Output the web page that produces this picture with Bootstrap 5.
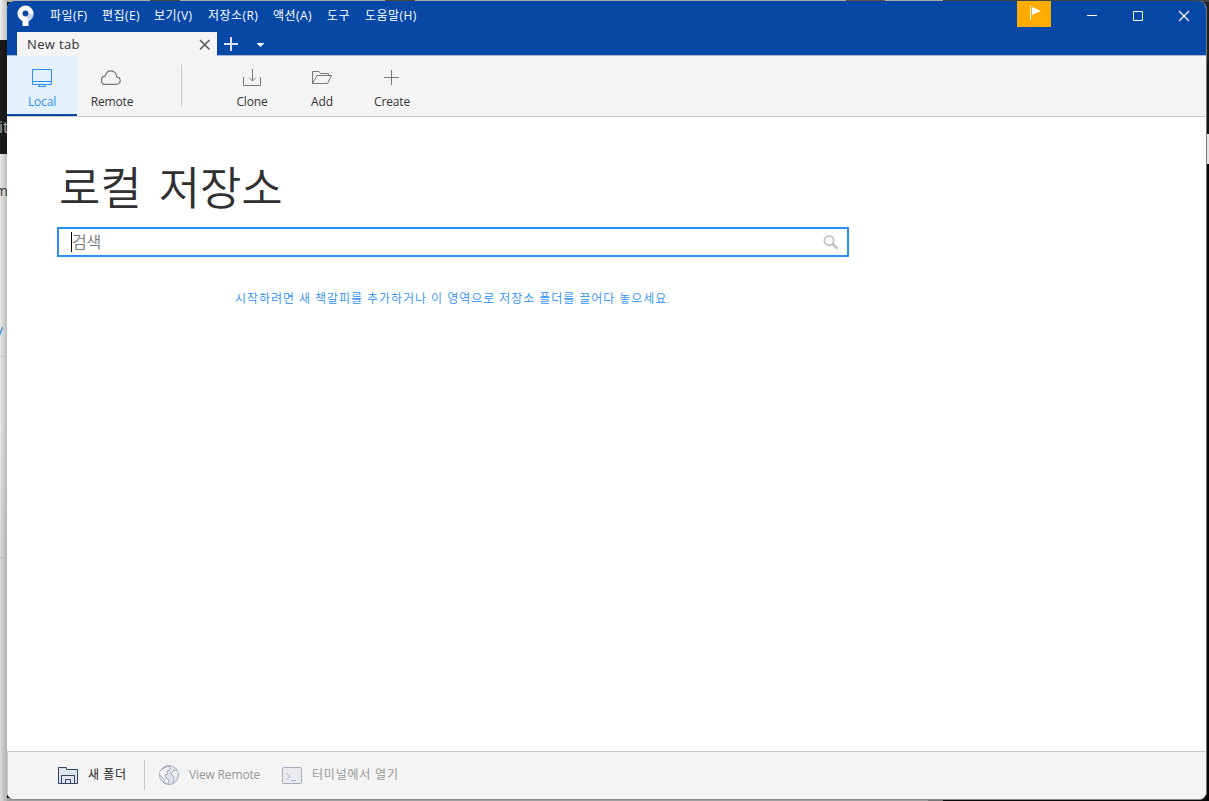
<!DOCTYPE html>
<html lang="ko">
<head>
<meta charset="utf-8">
<title>New tab</title>
<link href="https://cdn.jsdelivr.net/npm/bootstrap@5.3.0/dist/css/bootstrap.min.css" rel="stylesheet">
<style>
body{height:801px;overflow:hidden;font-family:"Open Sans","Noto Sans CJK KR",sans-serif;font-size:12px;line-height:18px;color:#333;white-space:nowrap;
background:
linear-gradient(#c8c8c8,#c8c8c8) 0 356px/7px 1px no-repeat,
linear-gradient(#bbb,#bbb) 0 557px/7px 1px no-repeat,
linear-gradient(90deg,#0000,#0003) 0 0/7px 801px no-repeat,
linear-gradient(#ededed 0 40px,#1b1b1b 40px 154px,#e9e9e9 154px 420px,#dadada 560px 801px) 0 0/7px 801px no-repeat,
linear-gradient(90deg,#aaa 0 150px,#454545 150px 180px,#aaa 180px 385px,#504536 385px 415px,#aaa 415px 846px,#6b4b3c 846px 885px,#aaa 885px 943px,#444 943px) 0 0/1209px 2px no-repeat,
linear-gradient(90deg,#a0a0a0 0 928px,#777 928px 943px,#080808 943px) 0 798px/1209px 3px no-repeat,
linear-gradient(#202020 0 60px,#101616 60px 134px) 1205px 0/4px 134px no-repeat,
linear-gradient(#e4e4e4,#e4e4e4) 1205px 134px/4px 30px no-repeat,#050505}
.desk{left:0;width:7px;height:801px;overflow:hidden}
.desk span{position:absolute}
.window{width:1200px;height:799px;margin:1px 0 0 7px;border-radius:8px;overflow:hidden;background:#fff;border-right:1px solid #777;border-bottom:1px solid #8c8c8c}
.titlebar{height:31px;background:#0747a6;color:#fff}
.menus{display:grid;grid-template-columns:52px 52px 54px 65px 54px 38px 60px;margin:6px 0 0 15px;letter-spacing:.45px}
.flag{width:34px;height:26px;background:#ffab00}
.tabs{height:24px;background:#0747a6;border-bottom:1px solid #a9b9d3}
.doc-tab{width:200px;height:24px;background:#f4f4f4;padding-left:10px;margin-left:10px;font-size:13px;letter-spacing:.35px}
.tools{height:61px;background:#f4f4f4;border-bottom:1px solid #c8c8c8}
.tool{width:70px;height:60px;padding-top:11px;letter-spacing:-.15px}
.tool svg{margin-bottom:6px}
.tool.on{background:#e4f0fb;color:#2a8ff7;border-bottom:2px solid #0747a6}
.vline{width:1px;background:#c8c8c8}
.title{font-size:45px;line-height:60px;font-weight:350;font-family:"Noto Sans CJK KR",sans-serif;margin:39px 0 11px 52px;color:#303030;word-spacing:5px;letter-spacing:-.2px}
.search{width:792px;height:30px;margin-left:50px;border:2px solid #2b90f5;padding:0 8px 0 12px;font-size:16px;color:#777}
.search span{font-weight:350;letter-spacing:-.3px}
.caret{width:1px;height:20px;background:#000}
.hint{margin:33px 0 0 228px;color:#2a8ff7;font-weight:350;letter-spacing:.95px}
.foot{height:48px;background:#f4f4f4;border-top:1px solid #c8c8c8;border-left:1px solid #c8c8c8;color:#999;padding-bottom:2px}
svg{display:block;flex:none}
</style>
</head>
<body>
<div class="desk position-absolute top-0"><span style="top:118px;left:-1px;color:#aaa;font-size:16px">it</span><span style="top:182px;left:-5px;font-size:14px">m</span><span style="top:323px;left:-2px;color:#1674c4;font-size:14px">/</span></div>
<div class="window position-relative d-flex flex-column">
 <header class="titlebar d-flex align-items-start flex-shrink-0">
  <svg width="18" height="22" viewBox="0 0 18 22" style="margin:4px 0 0 10px"><path fill="#fff" fill-rule="evenodd" d="M8.500.6a8 8 0 0 0-8 8c0 3.500 2 6.300 5 7.300V21h6v-4.800c3-1.200 5-4 5-7.400a8 8 0 0 0-8-8.200zm0 5a3 3 0 1 1 0 6 3 3 0 0 1 0-6z"/><path fill="#a5bbe0" d="M11.500 16.200c3-1.200 5-4 5-7.400l-5 .3-2 2.500 1.500 3z" opacity=".6"/></svg>
  <nav class="menus"><span>파일(F)</span><span>편집(E)</span><span>보기(V)</span><span>저장소(R)</span><span>액션(A)</span><span>도구</span><span>도움말(H)</span></nav>
  <div class="ms-auto flag"><svg width="34" height="26"><path d="M13.500 5v14" stroke="#fff"/><path d="M15 6l9 4-9 4z" fill="#fff"/></svg></div>
  <svg width="155" height="30" fill="none" stroke="#fff"><path d="M36 14.500h10M82.500 10.500h9v9h-9z"/><path d="M128 10l10 10m0-10l-10 10" stroke-width="1.200"/></svg>
 </header>
 <div class="tabs d-flex flex-shrink-0">
  <div class="doc-tab d-flex align-items-center justify-content-between"><span>New tab</span><svg width="24" height="24"><path d="M7 8l9.500 9.500M16.500 8L7 17.500" stroke="#555" stroke-width="1.500"/></svg></div>
  <svg width="60" height="23"><path d="M7 12h14M14 5v14" stroke="#dce6f8" stroke-width="2"/><path d="M39.500 11h8l-4 4z" fill="#fff"/></svg>
 </div>
 <div class="tools d-flex flex-shrink-0">
  <div class="tool on d-flex flex-column align-items-center"><svg width="22" height="20" fill="none" stroke="#2a8ff7"><path d="M1.500 2.500h19v15h-19zM1.500 14.500h19M8.500 17.500v2M13.500 17.500v2M7 19.500h8"/></svg><span>Local</span></div>
  <div class="tool d-flex flex-column align-items-center"><svg width="22" height="20" fill="none" stroke="#777" stroke-width="1.200"><path d="M3.300 17.300h12c2 0 3.900-1.500 3.900-3.600 0-2.100-1.500-3.600-3.500-3.800C15.600 6.500 13 3.800 9.900 3.800c-3 0-5 2.200-5.500 5.100-2.400.3-3.900 2-3.900 4.100 0 2.400 1.200 4.300 2.800 4.300z"/></svg><span>Remote</span></div>
  <div class="vline" style="height:42px;margin:9px 35px 0 34px"></div>
  <div class="tool d-flex flex-column align-items-center"><svg width="22" height="20" fill="none" stroke="#777"><path d="M2.500 10v8.500h17V10M11.500 2v12M8 10.500l3.500 3.500 3.500-3.500"/></svg><span>Clone</span></div>
  <div class="tool d-flex flex-column align-items-center"><svg width="22" height="20" fill="none" stroke="#777"><path d="M1.500 16.500v-12H8l1.500 2h8v2M1.500 16.500h15l4-8H6z"/></svg><span>Add</span></div>
  <div class="tool d-flex flex-column align-items-center"><svg width="22" height="20" stroke="#777"><path d="M3 10.500h15M10.500 3v15"/></svg><span>Create</span></div>
 </div>
 <main class="flex-grow-1">
  <h1 class="title">로컬 저장소</h1>
  <div class="search d-flex align-items-center"><i class="caret"></i><span>검색</span><svg class="ms-auto" width="16" height="16" fill="none" stroke="#c3c3c3"><circle cx="6" cy="6.500" r="4.600" stroke-width="1.800"/><path d="M9.500 10l5 4.500" stroke-width="2.600"/></svg></div>
  <p class="hint">시작하려면 새 책갈피를 추가하거나 이 영역으로 저장소 폴더를 끌어다 놓으세요.</p>
 </main>
 <footer class="foot d-flex align-items-center flex-shrink-0">
  <svg width="22" height="20" style="margin-left:49px" fill="#dfe5ee" stroke="#344563"><path d="M1.500 18.500v-16h8v2h11v14h-3v-8h-13v8zM4.500 18.500v-8h13v8zM8.500 18.500v-4h5v4"/></svg>
  <span style="margin-left:9px;width:56px;color:#222;letter-spacing:.6px">새 폴더</span>
  <div class="vline" style="height:30px"></div>
  <svg width="22" height="22" style="margin-left:13px" fill="#dfe4ec" stroke="#a5adba"><circle cx="11" cy="11" r="9.500"/><path fill="#f4f4f4" d="M2 7l4-3 5-2 1 4-3 1 1 3-3 1 1 3 3 2-1 4-3-1-1-4-4-4M20 7l-4-1-3 4 3 3-1 6"/></svg>
  <span style="margin-left:9px;width:92px;letter-spacing:-.15px">View Remote</span>
  <svg width="22" height="20" fill="#e9ebef" stroke="#a5adba"><rect x="1.500" y="2.500" width="19" height="16" rx="1"/><path fill="none" d="M5 8l4 3.500L5 15M10 15.500h5"/></svg>
  <span style="margin-left:9px;letter-spacing:.8px">터미널에서 열기</span>
 </footer>
</div>
<script src="https://cdn.jsdelivr.net/npm/bootstrap@5.3.0/dist/js/bootstrap.bundle.min.js"></script>
</body>
</html>
